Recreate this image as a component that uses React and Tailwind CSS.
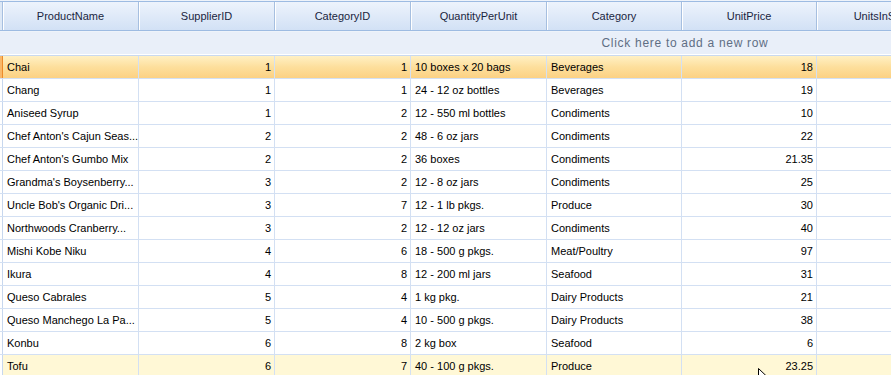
import React from "react";

const columns = [
  ["ProductName", "w-[136px]"],
  ["SupplierID", "w-[136px]"],
  ["CategoryID", "w-[136px]"],
  ["QuantityPerUnit", "w-[136px]"],
  ["Category", "w-[135px]"],
  ["UnitPrice", "w-[135px]"],
  ["UnitsInStock", "w-[136px]"],
  ["UnitsOnOrder", "w-[136px]"],
  ["ReorderLevel", "w-[136px]"],
  ["Discontinued", "w-[136px]"],
];

// name, supplier, category id, qty, category, price, stock, on order, reorder
const products = [
  ["Chai", 1, 1, "10 boxes x 20 bags", "Beverages", "18", 39, 0, 10],
  ["Chang", 1, 1, "24 - 12 oz bottles", "Beverages", "19", 17, 40, 25],
  ["Aniseed Syrup", 1, 2, "12 - 550 ml bottles", "Condiments", "10", 13, 70, 25],
  ["Chef Anton's Cajun Seas...", 2, 2, "48 - 6 oz jars", "Condiments", "22", 53, 0, 0],
  ["Chef Anton's Gumbo Mix", 2, 2, "36 boxes", "Condiments", "21.35", 0, 0, 0],
  ["Grandma's Boysenberry...", 3, 2, "12 - 8 oz jars", "Condiments", "25", 120, 0, 25],
  ["Uncle Bob's Organic Dri...", 3, 7, "12 - 1 lb pkgs.", "Produce", "30", 15, 0, 10],
  ["Northwoods Cranberry...", 3, 2, "12 - 12 oz jars", "Condiments", "40", 6, 0, 0],
  ["Mishi Kobe Niku", 4, 6, "18 - 500 g pkgs.", "Meat/Poultry", "97", 29, 0, 0],
  ["Ikura", 4, 8, "12 - 200 ml jars", "Seafood", "31", 31, 0, 0],
  ["Queso Cabrales", 5, 4, "1 kg pkg.", "Dairy Products", "21", 22, 30, 30],
  ["Queso Manchego La Pa...", 5, 4, "10 - 500 g pkgs.", "Dairy Products", "38", 86, 0, 0],
  ["Konbu", 6, 8, "2 kg box", "Seafood", "6", 24, 0, 5],
  ["Tofu", 6, 7, "40 - 100 g pkgs.", "Produce", "23.25", 35, 0, 0],
];

function Cell({ children, right, w = "w-[136px]" }) {
  return (
    <div
      className={
        w +
        " shrink-0 h-full flex items-center pl-[4px] pr-[3px] border-r border-[#d3e0f3] whitespace-nowrap overflow-hidden " +
        (right ? "justify-end" : "justify-start")
      }
    >
      {children}
    </div>
  );
}

function Row({ p, state }) {
  const bg =
    state === "selected"
      ? "bg-gradient-to-b from-[#fff0c4] via-[#fddf9c] to-[#fcd183]"
      : state === "hover"
      ? "bg-[#fff8d6]"
      : "bg-white";
  return (
    <div className={"flex h-[23px] border-b border-[#d3e0f3] " + bg}>
      <div
        className={
          "w-[3px] shrink-0 border-r " +
          (state === "selected" ? "bg-[#f8b768] border-[#ec8a2a]" : "bg-white border-[#c7d7ee]")
        }
      />
      <Cell>{p[0]}</Cell>
      <Cell right>{p[1]}</Cell>
      <Cell right>{p[2]}</Cell>
      <Cell>{p[3]}</Cell>
      <Cell w="w-[135px]">{p[4]}</Cell>
      <Cell right w="w-[135px]">{p[5]}</Cell>
      <Cell right>{p[6]}</Cell>
      <Cell right>{p[7]}</Cell>
      <Cell right>{p[8]}</Cell>
      <Cell>
        <span className="w-[11px] h-[11px] border border-[#8aa5c8] bg-white" />
      </Cell>
    </div>
  );
}

export default function App() {
  return (
    <div className="relative w-[891px] h-[375px] overflow-hidden bg-white font-['Liberation_Sans',Arial,sans-serif] text-[11px] text-black">
      <div className="w-[1370px] pt-px bg-[#eef3fa]">
        {/* header */}
        <div className="flex h-[30px] border-t border-b border-[#9dbbe2] bg-gradient-to-b from-[#edf3fc] to-[#d2e1f5] text-[#1a2540]">
          <div className="w-[3px] shrink-0 border-r border-[#a6bfe0] bg-[#dde8f6]" />
          {columns.map(([c, w]) => (
            <div
              key={c}
              className={
                w +
                " shrink-0 h-full flex items-center justify-center border-r border-[#a6bfe0] shadow-[inset_1px_0_0_#ffffff]"
              }
            >
              {c}
            </div>
          ))}
        </div>

        {/* new row */}
        <div className="mt-px h-[23px] flex items-center justify-center bg-[#e9eff9] border-b border-[#ffffff] text-[12px] tracking-[0.7px] text-[#5f6e84]">
          Click here to add a new row
        </div>

        <div className="h-px bg-[#c9d9ef]" />

        {products.map((p, i) => (
          <Row key={p[0]} p={p} state={i === 0 ? "selected" : i === products.length - 1 ? "hover" : ""} />
        ))}
      </div>

      {/* mouse pointer */}
      <svg className="absolute left-[758px] top-[368px]" width="12" height="18" viewBox="0 0 12 18">
        <path d="M0.5 0.5 L0.5 14 L3.8 10.8 L6.2 16.5 L8.2 15.6 L5.9 10 L10.5 10 Z" fill="#ffffff" stroke="#000000" strokeWidth="1" />
      </svg>
    </div>
  );
}
